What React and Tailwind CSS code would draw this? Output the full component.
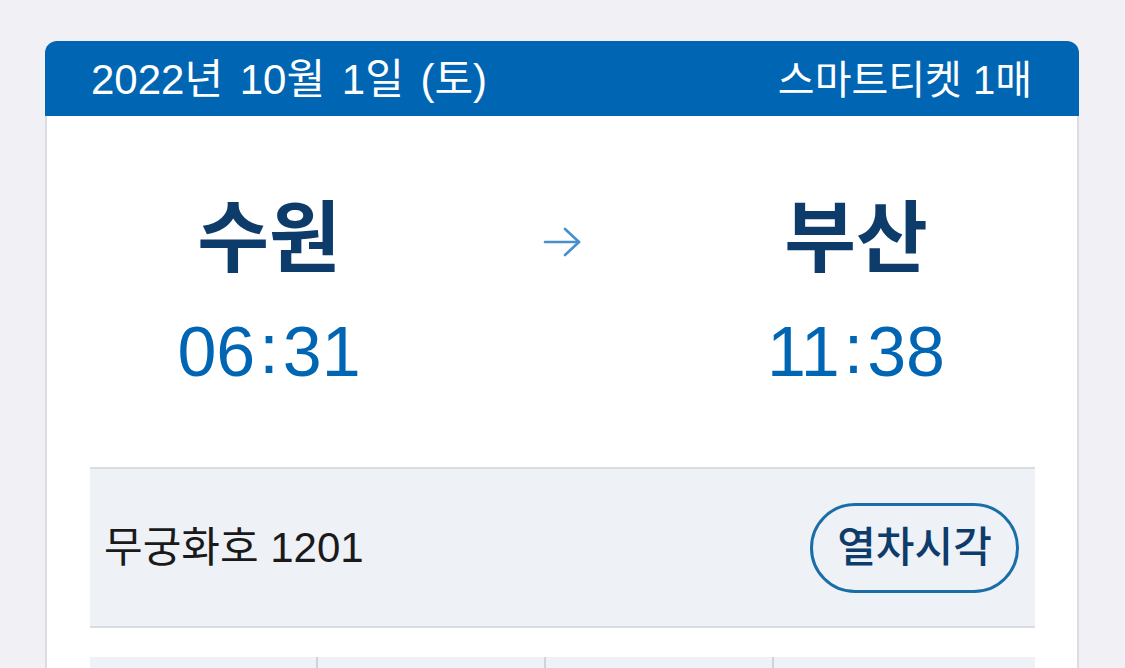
import React from "react";

const FONT = { fontFamily: '"Liberation Sans", "Noto Sans CJK KR", sans-serif' };

function Time({ h, m }) {
  return (
    <div className="mt-[39px] text-[70px] text-[#0066b3] leading-none flex items-baseline">
      <span>{h}</span>
      <span className="mx-[4px] relative top-[-3px]">:</span>
      <span>{m}</span>
    </div>
  );
}

export default function App() {
  return (
    <div className="min-h-screen bg-[#f0f0f5] pt-[41px] pl-[45px] pr-[46px]" style={FONT}>
      <div className="rounded-t-[12px] overflow-hidden">
        <div className="h-[75px] bg-[#0066b3] flex items-center justify-between pl-[46px] pr-[47px] text-white leading-none">
          <span className="text-[42px] pt-[2px] [word-spacing:5px]">2022년 10월 1일 (토)</span>
          <span className="text-[40px] pt-[2px]">스마트티켓 1매</span>
        </div>
        <div className="bg-white border-x-2 border-[#dcdce2] pl-[43px] pr-[42px]">
          <div className="h-[351px] grid grid-cols-[358px_1fr_358px] pt-[84px]">
            <div className="flex flex-col items-center">
              <div className="text-[78px] font-bold text-[#0d3c6b] leading-none">수원</div>
              <Time h="06" m="31" />
            </div>
            <div className="flex justify-center pt-[26px]">
              <svg width="40" height="32" viewBox="0 0 40 32" fill="none" stroke="#4a8fcc" strokeWidth="2.6" strokeLinecap="round" strokeLinejoin="round">
                <path d="M2 16 H36" />
                <path d="M22 3 L36 16 L22 29" />
              </svg>
            </div>
            <div className="flex flex-col items-center">
              <div className="text-[78px] font-bold text-[#0d3c6b] leading-none">부산</div>
              <Time h="11" m="38" />
            </div>
          </div>
          <div className="h-[161px] border-y-2 border-[#d9dce1] bg-[#eef1f6] flex items-center justify-between pl-[14px] pr-[16px]">
            <span className="text-[42px] text-[#1a1a1a]">무궁화호 1201</span>
            <button className="h-[90px] w-[209px] rounded-full border-[3px] border-[#1a6ea8] text-[42px] font-medium text-[#0d3c6b] flex items-center justify-center">
              열차시각
            </button>
          </div>
          <div className="pt-[29px]">
            <div className="grid grid-cols-[226px_226px_226px_1fr] gap-x-[2px] bg-[#d0d3d8] h-[80px]">
              <div className="bg-[#eef1f6]" />
              <div className="bg-[#eef1f6]" />
              <div className="bg-[#eef1f6]" />
              <div className="bg-[#eef1f6]" />
            </div>
          </div>
        </div>
      </div>
    </div>
  );
}
